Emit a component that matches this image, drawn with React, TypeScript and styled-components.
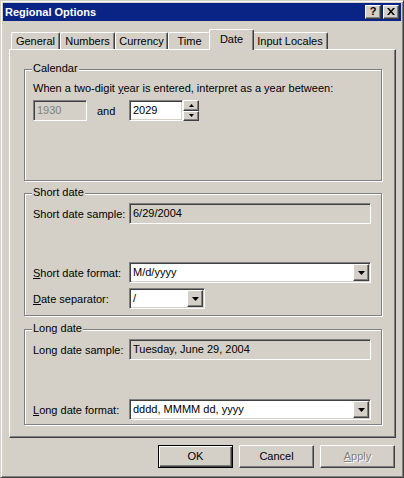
import React from "react";
import styled, { createGlobalStyle, css } from "styled-components";

const FACE = "#d4d0c8";
const SHADOW = "#808080";
const DARK = "#404040";
const CAPTION = "#0a2486";

const GlobalStyle = createGlobalStyle`
  html, body {
    margin: 0;
    padding: 0;
    background: ${FACE};
  }
  body {
    font-family: "Liberation Sans", Arial, sans-serif;
    font-size: 11px;
    color: #000;
  }
  * {
    box-sizing: border-box;
  }
`;

const raised = css`
  border: 1px solid;
  border-color: #fff ${DARK} ${DARK} #fff;
  box-shadow: inset -1px -1px ${SHADOW};
`;

const sunken = css`
  border: 1px solid;
  border-color: ${SHADOW} #fff #fff ${SHADOW};
  box-shadow: inset 1px 1px ${DARK}, inset -1px -1px ${FACE};
`;

const Window = styled.div`
  width: 404px;
  height: 478px;
  background: ${FACE};
  border: 1px solid;
  border-color: ${FACE} ${DARK} ${DARK} ${FACE};
  box-shadow: inset 1px 1px #fff, inset -1px -1px ${SHADOW};
  padding: 2px;
  display: flex;
  flex-direction: column;
`;

const TitleBar = styled.div`
  height: 18px;
  background: ${CAPTION};
  display: flex;
  align-items: center;
  justify-content: space-between;
  padding: 0 2px;
`;

const Title = styled.span`
  color: #fff;
  font-weight: bold;
  font-size: 11px;
`;

const CaptionButtons = styled.div`
  display: flex;
  gap: 2px;
`;

const CaptionButton = styled.div`
  ${raised};
  width: 16px;
  height: 14px;
  background: ${FACE};
  display: flex;
  align-items: center;
  justify-content: center;
  font-weight: bold;
  font-size: 11px;
  line-height: 1;
  padding-bottom: 1px;
`;

const Body = styled.div`
  padding: 8px 5px 0 6px;
  display: flex;
  flex-direction: column;
`;

const TabStrip = styled.div`
  height: 20px;
  display: flex;
  align-items: flex-end;
  padding-left: 2px;
  position: relative;
  z-index: 1;
`;

const Tab = styled.div<{ $w: number; $active?: boolean }>`
  width: ${(p) => p.$w}px;
  height: 17px;
  background: ${FACE};
  border-top: 1px solid #fff;
  border-left: 1px solid #fff;
  border-right: 1px solid ${DARK};
  border-radius: 2px 2px 0 0;
  box-shadow: inset -1px 0 ${SHADOW};
  display: flex;
  align-items: center;
  justify-content: center;
  padding-bottom: 1px;
  white-space: nowrap;
  ${(p) =>
    p.$active &&
    css`
      height: 21px;
      margin: 0 -2px -1px;
      position: relative;
      z-index: 2;
      padding-bottom: 3px;
    `}
`;

const Panel = styled.div`
  width: 387px;
  height: 389px;
  border: 1px solid;
  border-color: #fff ${DARK} ${DARK} #fff;
  box-shadow: inset -1px -1px ${SHADOW};
  padding: 19px 13px 0 14px;
  display: flex;
  flex-direction: column;
`;

const Group = styled.div<{ $h: number; $mt?: number }>`
  position: relative;
  height: ${(p) => p.$h}px;
  margin-top: ${(p) => p.$mt ?? 0}px;
  border: 1px solid ${SHADOW};
  box-shadow: inset 1px 1px #fff, 1px 1px #fff;
  padding: 0 8px;
  display: flex;
  flex-direction: column;
`;

const Legend = styled.span`
  position: absolute;
  left: 7px;
  top: -8px;
  padding: 0 1px;
  line-height: 13px;
  background: ${FACE};
`;

const Text = styled.div<{ $mt?: number }>`
  margin-top: ${(p) => p.$mt ?? 0}px;
  line-height: 13px;
  white-space: nowrap;
`;

const Row = styled.div<{ $mt?: number }>`
  display: flex;
  align-items: center;
  height: 21px;
  margin-top: ${(p) => p.$mt ?? 0}px;
`;

const Label = styled.span<{ $w?: number; $ml?: number }>`
  width: ${(p) => p.$w ?? 96}px;
  margin-left: ${(p) => p.$ml ?? 0}px;
  white-space: nowrap;
`;

const Edit = styled.div<{ $w: number; $disabled?: boolean }>`
  ${sunken};
  width: ${(p) => p.$w}px;
  height: 21px;
  background: ${(p) => (p.$disabled ? FACE : "#fff")};
  color: ${(p) => (p.$disabled ? SHADOW : "#000")};
  display: flex;
  align-items: center;
  padding: 0 0 1px 3px;
  white-space: nowrap;
`;

const Spin = styled.div`
  width: 16px;
  height: 21px;
  display: flex;
  flex-direction: column;
`;

const SpinButton = styled.div`
  ${raised};
  flex: 1;
  background: ${FACE};
  display: flex;
  align-items: center;
  justify-content: center;
`;

const Combo = styled.div<{ $w: number }>`
  ${sunken};
  width: ${(p) => p.$w}px;
  height: 21px;
  background: #fff;
  display: flex;
  padding: 1px;
`;

const ComboText = styled.div`
  flex: 1;
  display: flex;
  align-items: center;
  padding: 0 0 1px 2px;
  white-space: nowrap;
`;

const DropButton = styled.div`
  ${raised};
  width: 16px;
  background: ${FACE};
  display: flex;
  align-items: center;
  justify-content: center;
`;

const Footer = styled.div`
  display: flex;
  justify-content: flex-end;
  gap: 6px;
  margin-top: 7px;
  padding-right: 1px;
`;

const Button = styled.div<{ $default?: boolean; $disabled?: boolean }>`
  ${raised};
  width: 75px;
  height: 23px;
  background: ${FACE};
  display: flex;
  align-items: center;
  justify-content: center;
  padding-bottom: 1px;
  color: ${(p) => (p.$disabled ? SHADOW : "#000")};
  text-shadow: ${(p) => (p.$disabled ? "1px 1px #fff" : "none")};
  ${(p) =>
    p.$default &&
    css`
      border-color: #000;
      box-shadow: inset 1px 1px #fff, inset -1px -1px ${DARK},
        inset -2px -2px ${SHADOW};
    `}
`;

const Arrow = ({ up = false, w = 7 }: { up?: boolean; w?: number }) => {
  const h = Math.ceil(w / 2);
  const pts = up
    ? `0,${h} ${w},${h} ${w / 2},0`
    : `0,0 ${w},0 ${w / 2},${h}`;
  return (
    <svg width={w} height={h} viewBox={`0 0 ${w} ${h}`}>
      <polygon points={pts} fill="#000" />
    </svg>
  );
};

const CloseGlyph = () => (
  <svg width="8" height="7" viewBox="0 0 8 7">
    <path
      d="M0 0h2l2 2.5L6 0h2L5 3.5 8 7H6L4 4.5 2 7H0l3-3.5z"
      fill="#000"
    />
  </svg>
);

const ComboBox = ({ w, value }: { w: number; value: string }) => (
  <Combo $w={w}>
    <ComboText>{value}</ComboText>
    <DropButton>
      <Arrow />
    </DropButton>
  </Combo>
);

const tabs = [
  { label: "General", w: 49 },
  { label: "Numbers", w: 55 },
  { label: "Currency", w: 53 },
  { label: "Time", w: 43 },
  { label: "Date", w: 45, active: true },
  { label: "Input Locales", w: 76 },
];

export default function App() {
  return (
    <>
      <GlobalStyle />
      <Window>
        <TitleBar>
          <Title>Regional Options</Title>
          <CaptionButtons>
            <CaptionButton>?</CaptionButton>
            <CaptionButton>
              <CloseGlyph />
            </CaptionButton>
          </CaptionButtons>
        </TitleBar>
        <Body>
          <TabStrip>
            {tabs.map((t) => (
              <Tab key={t.label} $w={t.w} $active={t.active}>
                {t.label}
              </Tab>
            ))}
          </TabStrip>
          <Panel>
            <Group $h={112}>
              <Legend>Calendar</Legend>
              <Text $mt={12}>
                When a two-digit <u>y</u>ear is entered, interpret as a year
                between:
              </Text>
              <Row $mt={5}>
                <Edit $w={54} $disabled>
                  1930
                </Edit>
                <Label $w={32} $ml={10}>
                  and
                </Label>
                <Edit $w={54}>2029</Edit>
                <Spin>
                  <SpinButton>
                    <Arrow up w={5} />
                  </SpinButton>
                  <SpinButton>
                    <Arrow w={5} />
                  </SpinButton>
                </Spin>
              </Row>
            </Group>

            <Group $h={123} $mt={12}>
              <Legend>Short date</Legend>
              <Row $mt={9}>
                <Label>Short date sample:</Label>
                <Edit $w={242} $disabled style={{ color: "#000" }}>
                  6/29/2004
                </Edit>
              </Row>
              <Row $mt={38}>
                <Label>
                  <u>S</u>hort date format:
                </Label>
                <ComboBox w={242} value="M/d/yyyy" />
              </Row>
              <Row $mt={5}>
                <Label>
                  <u>D</u>ate separator:
                </Label>
                <ComboBox w={76} value="/" />
              </Row>
            </Group>

            <Group $h={96} $mt={13}>
              <Legend>Long date</Legend>
              <Row $mt={9}>
                <Label>Long date sample:</Label>
                <Edit $w={242} $disabled style={{ color: "#000" }}>
                  Tuesday, June 29, 2004
                </Edit>
              </Row>
              <Row $mt={39}>
                <Label>
                  <u>L</u>ong date format:
                </Label>
                <ComboBox w={242} value="dddd, MMMM dd, yyyy" />
              </Row>
            </Group>
          </Panel>
          <Footer>
            <Button $default>OK</Button>
            <Button>Cancel</Button>
            <Button $disabled>
              <u>A</u>pply
            </Button>
          </Footer>
        </Body>
      </Window>
    </>
  );
}
